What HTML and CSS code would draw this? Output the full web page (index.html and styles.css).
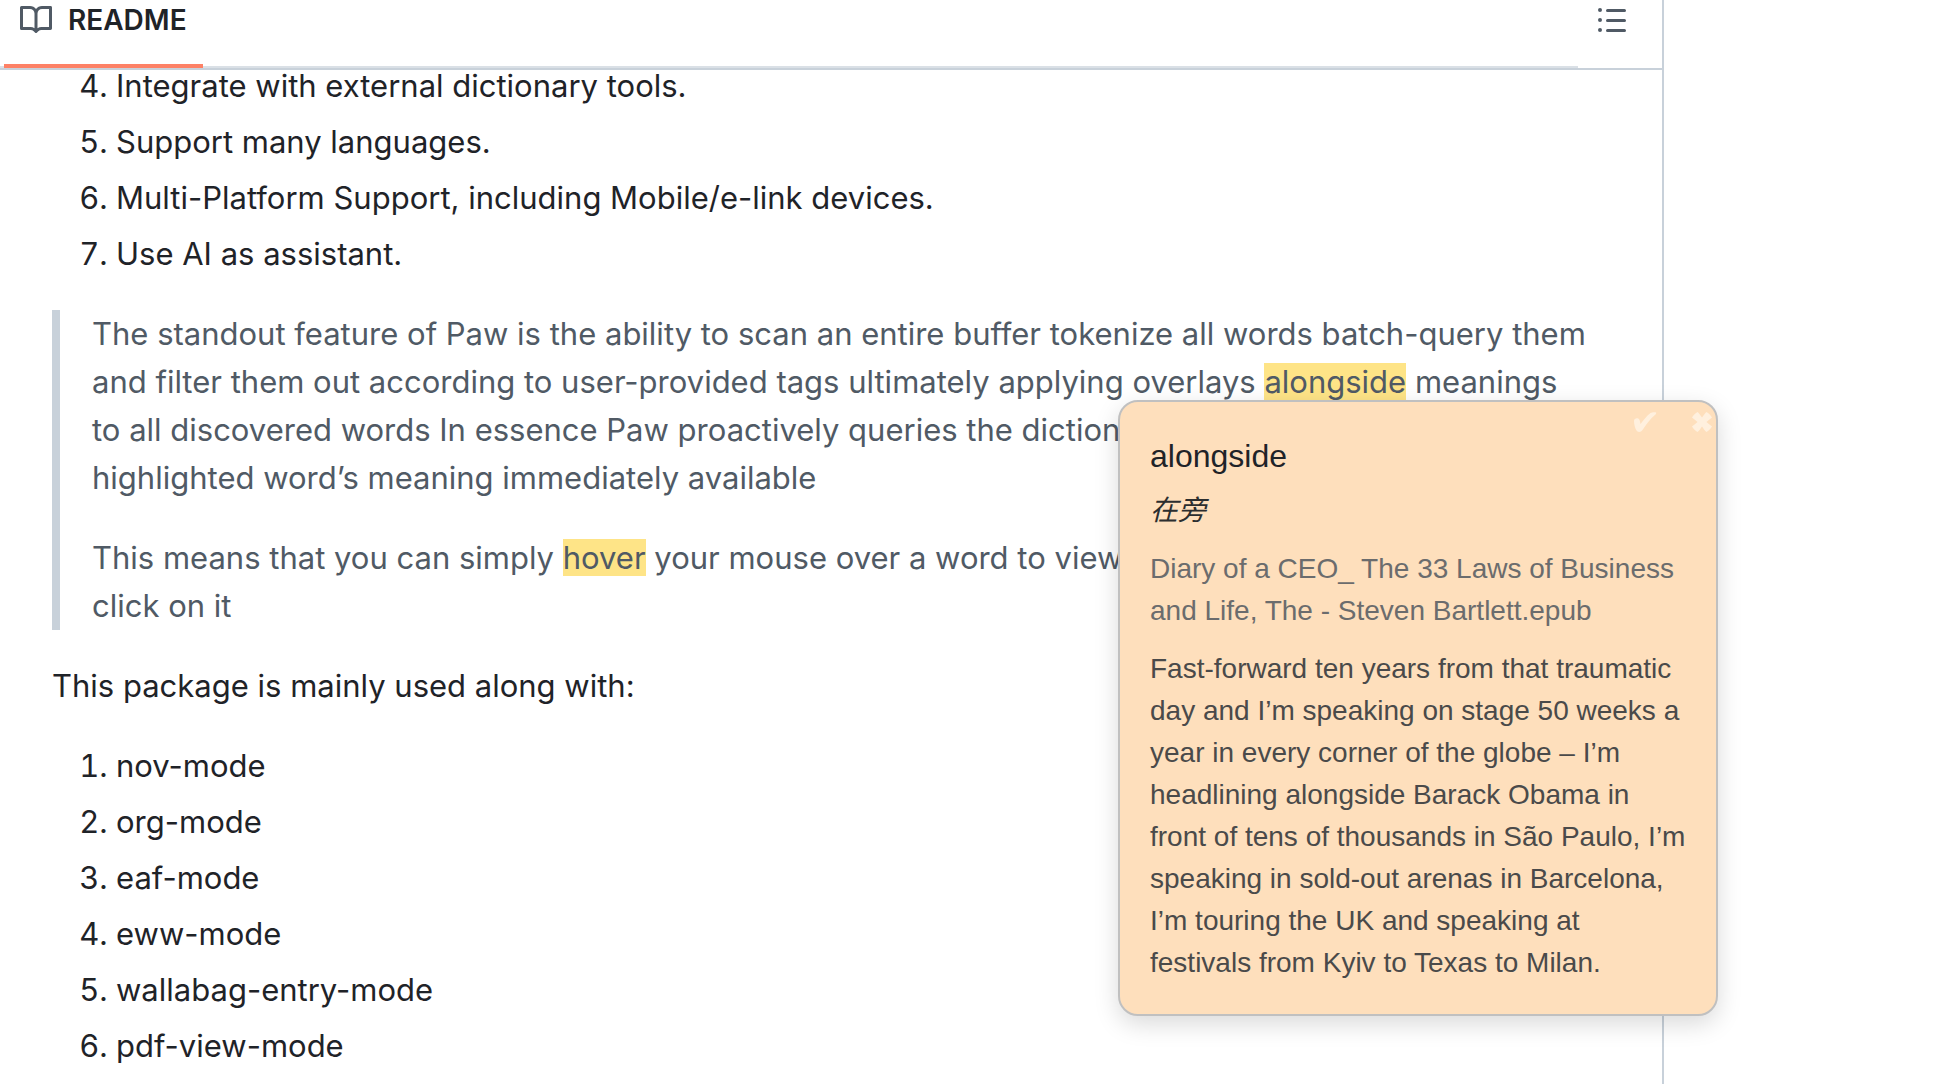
FILE: index.html
```html
<!DOCTYPE html>
<html lang="en">
<head>
<meta charset="utf-8">
<meta name="viewport" content="width=device-width, initial-scale=1">
<title>README</title>
<link rel="stylesheet" href="styles.css">
</head>
<body>
<main class="panel">
  <header class="bar">
    <nav class="tabs" aria-label="Repository files">
      <a class="tab" href="#readme">
        <svg class="icon" viewBox="0 0 16 16" aria-hidden="true"><path d="M0 1.75A.75.75 0 0 1 .75 1h4.253c1.227 0 2.317.59 3 1.501A3.743 3.743 0 0 1 11.006 1h4.245a.75.75 0 0 1 .75.75v10.5a.75.75 0 0 1-.75.75h-4.507a2.25 2.25 0 0 0-1.591.659l-.622.621a.75.75 0 0 1-1.06 0l-.622-.621A2.25 2.25 0 0 0 5.258 13H.75a.75.75 0 0 1-.75-.75Zm7.251 10.324.004-5.073-.002-2.253A2.25 2.25 0 0 0 5.003 2.5H1.5v9h3.757a3.75 3.75 0 0 1 1.994.574ZM8.755 4.75l-.004 7.322a3.752 3.752 0 0 1 1.992-.572H14.5v-9h-3.495a2.25 2.25 0 0 0-2.25 2.25Z"/></svg>
        <span>README</span>
      </a>
    </nav>
    <button class="outline" type="button" aria-label="Outline">
      <svg class="icon" viewBox="0 0 16 16" aria-hidden="true"><path d="M5.75 2.5h8.5a.75.75 0 0 1 0 1.5h-8.5a.75.75 0 0 1 0-1.5Zm0 5h8.5a.75.75 0 0 1 0 1.5h-8.5a.75.75 0 0 1 0-1.5Zm0 5h8.5a.75.75 0 0 1 0 1.5h-8.5a.75.75 0 0 1 0-1.5ZM2 14a1 1 0 1 1 0-2 1 1 0 0 1 0 2Zm1-6a1 1 0 1 1-2 0 1 1 0 0 1 2 0ZM2 4a1 1 0 1 1 0-2 1 1 0 0 1 0 2Z"/></svg>
    </button>
  </header>

  <article class="readme" id="readme">
    <ol class="list" start="4">
      <li>Integrate with external dictionary tools.</li>
      <li>Support many languages.</li>
      <li>Multi-Platform Support, including Mobile/e-link devices.</li>
      <li>Use AI as assistant.</li>
    </ol>
    <blockquote class="quote">
      <p>The standout feature of Paw is the ability to scan an entire buffer tokenize all words batch-query them<br>
      and filter them out according to user-provided tags ultimately applying overlays <mark>alongside</mark> meanings<br>
      to all discovered words In essence Paw proactively queries the dictionary<br>
      highlighted word’s meaning immediately available</p>
      <p>This means that you can simply <mark>hover</mark> your mouse over a word to view it<br>
      click on it</p>
    </blockquote>
    <p>This package is mainly used along with:</p>
    <ol class="list">
      <li>nov-mode</li>
      <li>org-mode</li>
      <li>eaf-mode</li>
      <li>eww-mode</li>
      <li>wallabag-entry-mode</li>
      <li>pdf-view-mode</li>
    </ol>
  </article>

  <aside class="popup" aria-label="alongside">
    <div class="actions">
      <button class="action" type="button" aria-label="Mark as known">
        <svg viewBox="0 0 24 20" width="24" height="20" aria-hidden="true"><path d="M1 9C1 7 3 6 5 6.500C7 7 7 10 7.500 12C10 8.500 14 3.500 17.500 1C19 0 22 0 23 .5C23.500 1 23 2 22.500 2.500C17 7 13 12.500 9.500 18C8 20.500 4.500 20.500 3.500 18.500C2 16 1 12 1 9Z"/></svg>
      </button>
      <button class="action" type="button" aria-label="Close">
        <svg viewBox="0 0 20 20" width="20" height="20" aria-hidden="true"><path d="M5.500 0C7 1 8.500 3.500 10 5.500C11.500 3.500 13 1 14.500 0C16.500 1 18.500 3 20 5.500C18 7 16.200 8.500 14.500 10C16.200 11.500 18 13 20 14.500C18.500 17 16.500 19 14.500 20C13 19 11.500 16.500 10 14.500C8.500 16.500 7 19 5.500 20C3.500 19 1.500 17 0 14.500C2 13 3.800 11.500 5.500 10C3.800 8.500 2 7 0 5.500C1.500 3 3.500 1 5.500 0Z"/></svg>
      </button>
    </div>
    <h2 class="word">alongside</h2>
    <p class="meaning" lang="zh-CN">在旁</p>
    <p class="source">Diary of a CEO_ The 33 Laws of Business and Life, The - Steven Bartlett.epub</p>
    <p class="excerpt">Fast-forward ten years from that traumatic day and I’m speaking on stage 50 weeks a year in every corner of the globe – I’m headlining alongside Barack Obama in front of tens of thousands in São Paulo, I’m speaking in sold-out arenas in Barcelona, I’m touring the UK and speaking at festivals from Kyiv to Texas to Milan.</p>
  </aside>
</main>
</body>
</html>
```
FILE: styles.css
```css
* {
  box-sizing: border-box;
}

body {
  margin: 0;
  background: #fff;
  color: #1f2328;
  font: 31px/48px Inter, "Noto Sans", sans-serif;
}

p,
h2,
ol,
blockquote {
  margin: 0;
}

.panel {
  position: relative;
  min-height: 100vh;
  margin-right: 272px;
  border-right: 2px solid #c8d1da;
}

/* Tab bar */
.bar {
  display: flex;
  justify-content: space-between;
  height: 70px;
  border-bottom: 2px solid #c8d1da;
}

.tabs {
  flex: 1;
  display: flex;
  padding-left: 4px;
  box-shadow: inset 0 -2px #dae0e6;
}

.tab {
  display: flex;
  align-items: flex-start;
  gap: 16px;
  padding: 4px 16px 0;
  border-bottom: 4px solid #fd8166;
  color: #1f2328;
  font-size: 28px;
  font-weight: 600;
  line-height: 32px;
  text-decoration: none;
}

.icon {
  display: block;
  width: 32px;
  height: 32px;
  fill: #505a65;
}

.outline {
  display: flex;
  width: 84px;
  padding: 4px 0 0 18px;
  border: 0;
  background: none;
}

/* Document */
.readme {
  display: grid;
  gap: 32px;
  margin-top: -8px;
  padding: 0 80px 0 52px;
}

.list {
  display: grid;
  gap: 8px;
  padding-left: 64px;
}

.quote {
  display: grid;
  gap: 32px;
  padding-left: 32px;
  border-left: 8px solid #c8d1da;
  color: #505a65;
  white-space: nowrap;
}

mark {
  background: #fee487;
  color: inherit;
}

/* Word card */
.popup {
  position: absolute;
  top: 400px;
  right: -56px;
  display: grid;
  gap: 16px;
  width: 600px;
  padding: 30px 28px 30px 30px;
  border: 2px solid #c0c0c0;
  border-radius: 20px;
  background: #fedfbc;
  box-shadow: 0 8px 24px rgb(0 0 0 / 15%);
  color: #4a4a4a;
  font: 28px/42px "Liberation Sans", "Noto Sans CJK SC", sans-serif;
}

.actions {
  position: absolute;
  top: 10px;
  right: 4px;
  display: flex;
  gap: 35px;
}

.action {
  display: block;
  padding: 0;
  border: 0;
  background: none;
}

.action svg {
  display: block;
  fill: #fff0de;
}

.word {
  color: #1f2328;
  font-size: 32px;
  font-weight: 400;
  line-height: 48px;
}

.meaning {
  margin-top: -6px;
  color: #2c2e2f;
  font-style: italic;
}

.source {
  color: #6b6c6d;
}
```
